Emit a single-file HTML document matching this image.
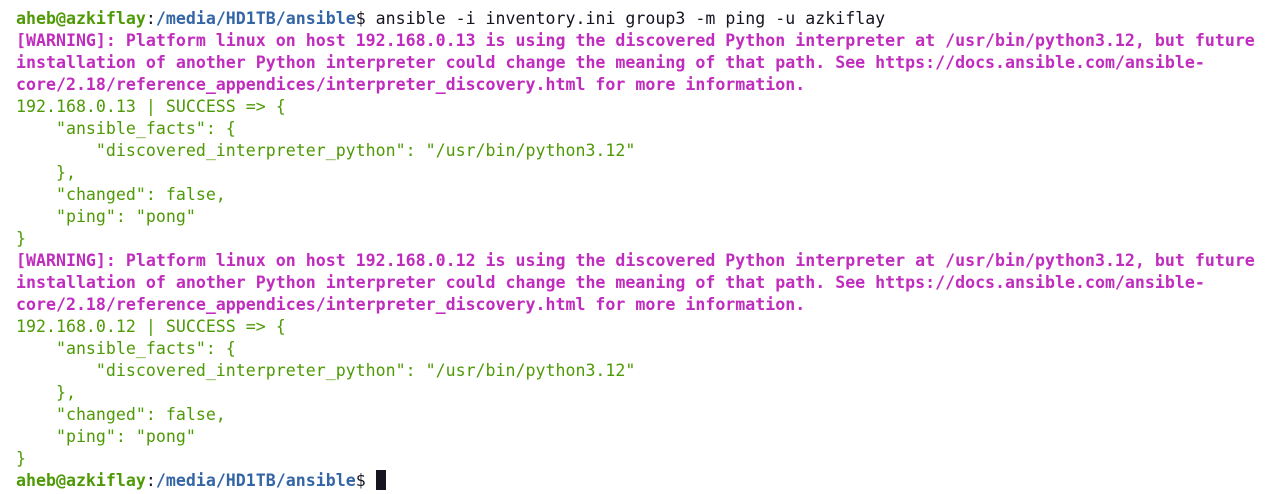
<!DOCTYPE html>
<html><head><meta charset="utf-8"><style>
html,body{margin:0;padding:0;background:#fff;width:1271px;height:494px;overflow:hidden}
pre{margin:0;padding:8px 0 0 16px;font-family:"DejaVu Sans Mono","Liberation Mono",monospace;font-size:16.6px;line-height:22px;color:#171421;white-space:pre}
.g{color:#4e9a06;font-weight:bold}.b{color:#3465a4;font-weight:bold}
.m{color:#c02cbd;font-weight:bold}.s{color:#4e9a06}
.cur{display:inline-block;width:10px;height:20px;background:#171421;vertical-align:-4px}
</style></head><body><pre><span class="g">aheb@azkiflay</span>:<span class="b">/media/HD1TB/ansible</span>$ ansible -i inventory.ini group3 -m ping -u azkiflay
<span class="m">[WARNING]: Platform linux on host 192.168.0.13 is using the discovered Python interpreter at /usr/bin/python3.12, but future
installation of another Python interpreter could change the meaning of that path. See https://docs.ansible.com/ansible-
core/2.18/reference_appendices/interpreter_discovery.html for more information.</span>
<span class="s">192.168.0.13 | SUCCESS =&gt; {
    "ansible_facts": {
        "discovered_interpreter_python": "/usr/bin/python3.12"
    },
    "changed": false,
    "ping": "pong"
}</span>
<span class="m">[WARNING]: Platform linux on host 192.168.0.12 is using the discovered Python interpreter at /usr/bin/python3.12, but future
installation of another Python interpreter could change the meaning of that path. See https://docs.ansible.com/ansible-
core/2.18/reference_appendices/interpreter_discovery.html for more information.</span>
<span class="s">192.168.0.12 | SUCCESS =&gt; {
    "ansible_facts": {
        "discovered_interpreter_python": "/usr/bin/python3.12"
    },
    "changed": false,
    "ping": "pong"
}</span>
<span class="g">aheb@azkiflay</span>:<span class="b">/media/HD1TB/ansible</span>$ <span class="cur"></span></pre></body></html>
